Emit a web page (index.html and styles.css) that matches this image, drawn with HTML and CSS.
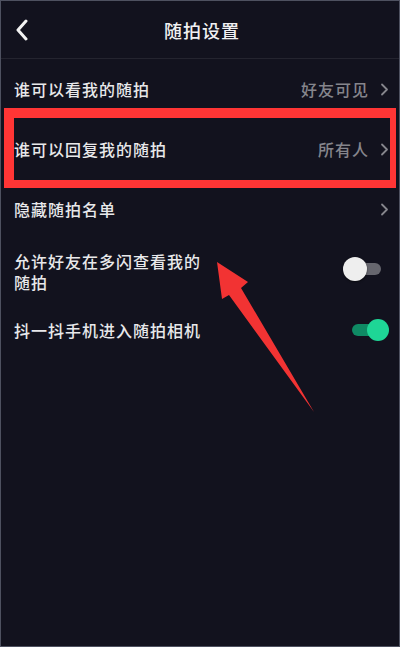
FILE: index.html
```html
<!DOCTYPE html>
<html lang="zh-CN">
<head>
    <meta charset="UTF-8">
    <meta name="viewport" content="width=device-width, initial-scale=1.0">
    <title>随拍设置</title>
    <link rel="stylesheet" href="styles.css">
</head>
<body>
    <div class="screen">
        <div class="header">
            <div class="back">
                <svg width="14" height="22" viewBox="0 0 14 22"><path d="M11 2 L3 11 L11 20" fill="none" stroke="#f2f2f2" stroke-width="3" stroke-linecap="round" stroke-linejoin="round"/></svg>
            </div>
            <div class="title">随拍设置</div>
            <div></div>
        </div>

        <div class="row">
            <span class="label">谁可以看我的随拍</span>
            <span class="value">好友可见</span>
            <svg class="chevron" width="9" height="13" viewBox="0 0 9 13"><path d="M2 1.5 L7 6.5 L2 11.5" fill="none" stroke="#85858c" stroke-width="1.8" stroke-linecap="round" stroke-linejoin="round"/></svg>
        </div>
        <div class="row">
            <span class="label">谁可以回复我的随拍</span>
            <span class="value">所有人</span>
            <svg class="chevron" width="9" height="13" viewBox="0 0 9 13"><path d="M2 1.5 L7 6.5 L2 11.5" fill="none" stroke="#85858c" stroke-width="1.8" stroke-linecap="round" stroke-linejoin="round"/></svg>
        </div>
        <div class="row">
            <span class="label">隐藏随拍名单</span>
            <svg class="chevron" width="9" height="13" viewBox="0 0 9 13"><path d="M2 1.5 L7 6.5 L2 11.5" fill="none" stroke="#85858c" stroke-width="1.8" stroke-linecap="round" stroke-linejoin="round"/></svg>
        </div>
        <div class="row row-tall">
            <span class="label label-wrap">允许好友在多闪查看我的随拍</span>
            <span class="switch switch-off"><span class="knob"></span></span>
        </div>
        <div class="row row-short">
            <span class="label">抖一抖手机进入随拍相机</span>
            <span class="switch switch-on"><span class="knob"></span></span>
        </div>

        <!-- annotation overlays -->
        <div class="mark-box"></div>
        <svg class="mark-arrow" width="400" height="647" viewBox="0 0 400 647">
            <polygon points="217,262 248,282 241,288 314,412 229,295 222,299" fill="#f23333"/>
        </svg>
    </div>
</body>
</html>
```

FILE: styles.css
```css
body {
    margin: 0;
    background: #12121e;
    font-family: "Noto Sans CJK SC", "Noto Sans", sans-serif;
}
.screen {
    position: relative;
    width: 400px;
    height: 647px;
    box-sizing: border-box;
    border: 1px solid #4e5160;
    background: #12121e;
    overflow: hidden;
}
.header {
    display: grid;
    grid-template-columns: 1fr auto 1fr;
    align-items: center;
    height: 57px;
    border-bottom: 1px solid #24242f;
}
.back {
    padding-left: 14px;
    display: flex;
    align-items: center;
}
.title {
    color: #f0f0f2;
    font-size: 18px;
    font-weight: 500;
    letter-spacing: 1px;
    padding-left: 4px;
}
.row {
    display: flex;
    align-items: center;
    height: 60px;
    padding: 0 10px 0 13px;
}
.row-tall {
    height: 66px;
}
.row-short {
    height: 50px;
}
.label {
    flex: 1;
    color: #e8e8ea;
    font-size: 16px;
    font-weight: 500;
    letter-spacing: 1px;
    line-height: 21px;
}
.label-wrap {
    flex: none;
    max-width: 192px;
    margin-right: auto;
}
.value {
    color: #85858c;
    font-size: 16px;
    font-weight: 500;
    letter-spacing: 1px;
    margin-right: 11px;
}
.chevron {
    display: block;
}
.switch {
    position: relative;
    width: 38px;
    height: 24px;
}
.switch::before {
    content: "";
    position: absolute;
    top: 6px;
    left: 6px;
    right: 0;
    height: 12px;
    border-radius: 6px;
}
.switch .knob {
    position: absolute;
    top: 0;
    width: 24px;
    height: 24px;
    border-radius: 50%;
}
.switch-off {
    margin-right: 8px;
    margin-top: -6px;
}
.switch-off::before {
    background: #66666e;
}
.switch-off .knob {
    left: 0;
    background: #eeeeee;
    box-shadow: 0 1px 2px rgba(0, 0, 0, 0.5);
}
.switch-on {
    width: 37px;
}
.switch-on::before {
    left: 0;
    right: 6px;
    background: #0f8a64;
}
.switch-on .knob {
    right: 0;
    top: 1px;
    width: 22px;
    height: 22px;
    background: #1ed696;
}
.mark-box {
    position: absolute;
    left: 3px;
    top: 107px;
    width: 392px;
    height: 80px;
    box-sizing: border-box;
    border-style: solid;
    border-color: #ff3535;
    border-width: 10px 6px 8px 10px;
}
.mark-arrow {
    position: absolute;
    left: -1px;
    top: -1px;
}
```
